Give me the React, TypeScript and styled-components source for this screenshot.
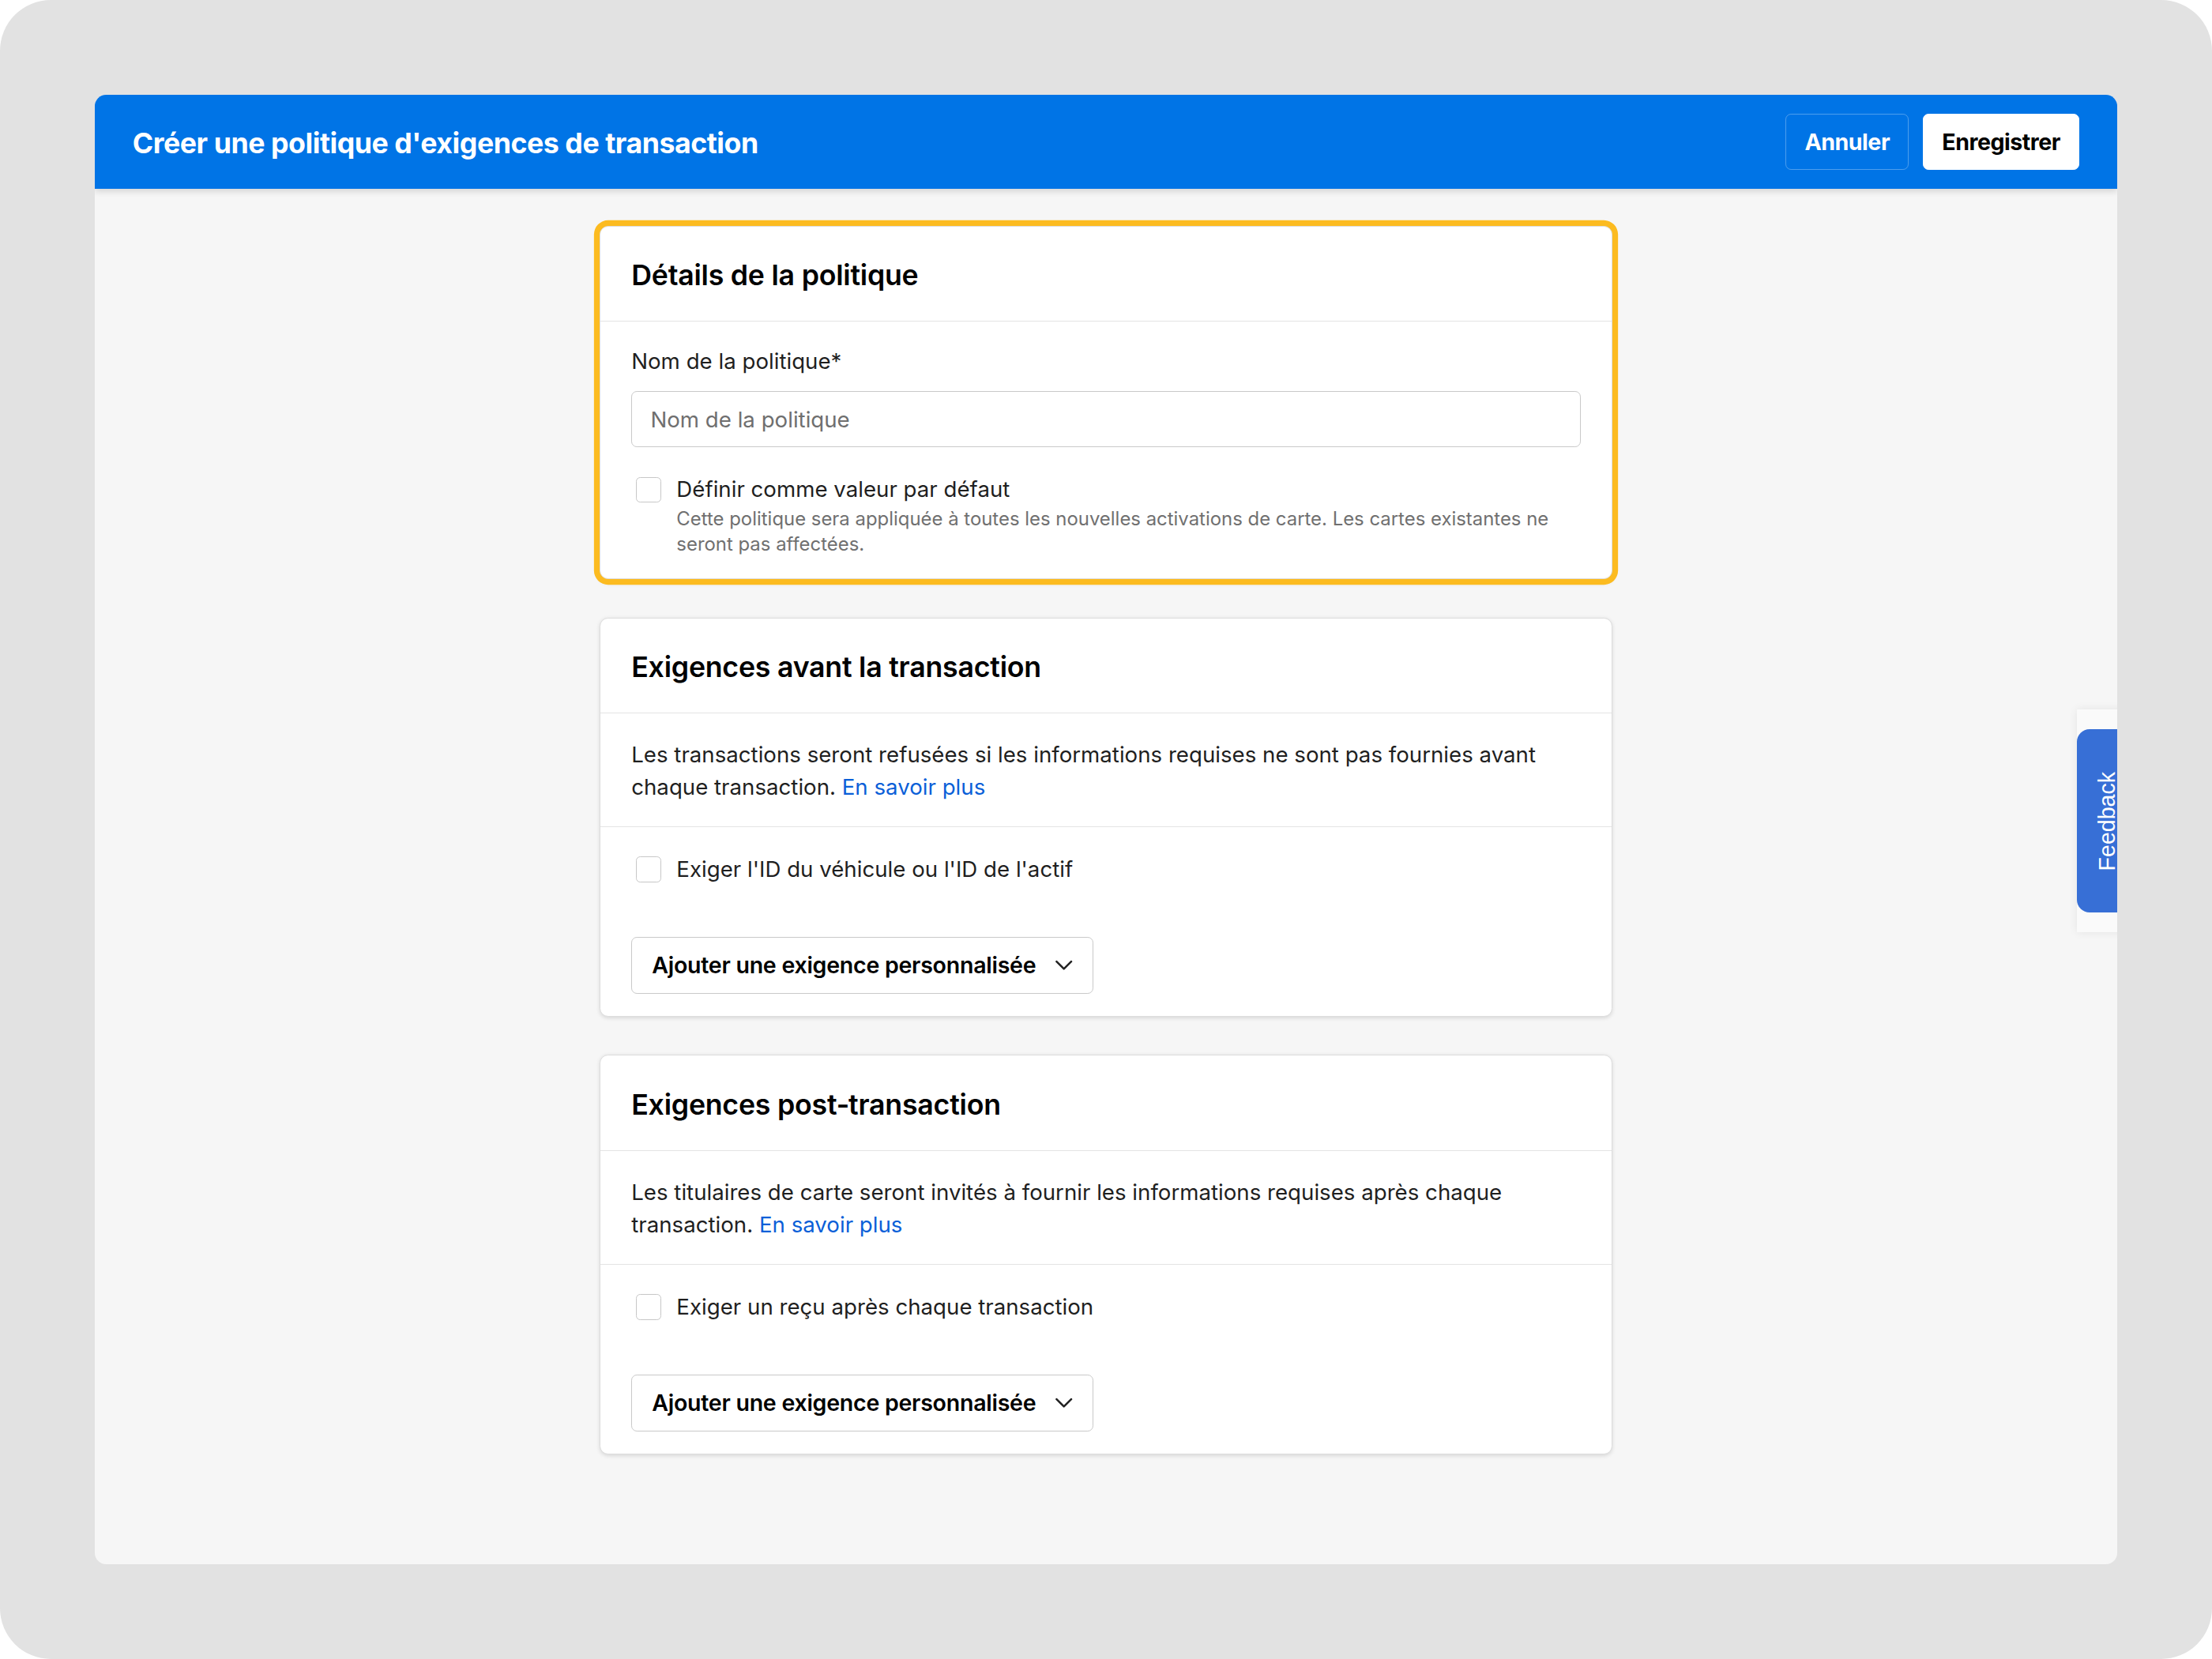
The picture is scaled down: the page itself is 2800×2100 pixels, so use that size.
import React from 'react';
import styled, { createGlobalStyle, css } from 'styled-components';

const GlobalStyle = createGlobalStyle`
  html, body {
    margin: 0;
    padding: 0;
    background: #ffffff;
  }
  body {
    font-family: Inter, "Noto Sans", sans-serif;
    -webkit-font-smoothing: antialiased;
  }
  * {
    box-sizing: border-box;
  }
`;

// the design is drawn at 1568 x 1176 and scaled up to fill the 2800 x 2100 window
const Frame = styled.div`
  zoom: 1.7857;
  width: 1568px;
  height: 1176px;
  padding: 67px;
  background: #e2e2e2;
  border-radius: 36px;
`;

const Window = styled.div`
  position: relative;
  height: 100%;
  display: flex;
  flex-direction: column;
  background: #f6f6f6;
  border-radius: 8px;
  overflow: hidden;
`;

const TopBar = styled.header`
  position: relative;
  z-index: 1;
  flex: none;
  height: 67px;
  display: flex;
  align-items: center;
  justify-content: space-between;
  padding: 0 27px;
  background: #0074e6;
  box-shadow: 0 2px 4px rgba(0, 0, 0, 0.12);
`;

const PageTitle = styled.h1`
  margin: 0;
  padding-top: 2px;
  font-size: 20px;
  font-weight: 700;
  letter-spacing: -0.26px;
  color: #ffffff;
`;

const Actions = styled.div`
  display: flex;
  gap: 10px;
`;

const HeaderButton = styled.button<{ $primary?: boolean }>`
  height: 40px;
  padding: 0 13px;
  border-radius: 4px;
  font-family: Inter, sans-serif;
  font-size: 16px;
  font-weight: 700;
  letter-spacing: -0.27px;
  cursor: pointer;
  border: 1px solid ${(p) => (p.$primary ? '#ffffff' : 'rgba(255, 255, 255, 0.3)')};
  background: ${(p) => (p.$primary ? '#ffffff' : 'transparent')};
  color: ${(p) => (p.$primary ? '#000000' : '#ffffff')};
`;

const Content = styled.main`
  flex: 1;
  display: flex;
  flex-direction: column;
  align-items: center;
  gap: 27px;
  padding-top: 26px;
`;

const Card = styled.section<{ $highlight?: boolean }>`
  width: 718px;
  background: #ffffff;
  border: 1px solid #dddddd;
  border-radius: 6px;
  box-shadow: 0 1px 3px rgba(0, 0, 0, 0.12);
  ${(p) =>
    p.$highlight &&
    css`
      box-shadow: 0 0 0 4px #fcbb20, 0 2px 4px rgba(0, 0, 0, 0.15);
    `}
`;

const CardHeader = styled.div`
  padding: 21px 22px 19px;
  border-bottom: 1px solid #e4e4e4;
`;

const CardTitle = styled.h2`
  margin: 0;
  font-size: 20px;
  line-height: 27px;
  font-weight: 600;
  letter-spacing: -0.13px;
  color: #000000;
`;

const Section = styled.div<{ $divided?: boolean }>`
  padding: 18px 22px 16px;
  ${(p) =>
    p.$divided &&
    css`
      border-bottom: 1px solid #e4e4e4;
    `}
`;

const FieldLabel = styled.label`
  display: block;
  margin-bottom: 9px;
  font-size: 15.5px;
  line-height: 24px;
  color: #1f1f1f;
`;

const TextInput = styled.input`
  display: block;
  width: 100%;
  height: 40px;
  padding: 0 13px;
  border: 1px solid #c9c9c9;
  border-radius: 4px;
  font-family: Inter, sans-serif;
  font-size: 15.5px;
  color: #1f1f1f;
  outline: none;

  &::placeholder {
    color: #6f6f6f;
    opacity: 1;
  }
`;

const CheckRow = styled.label<{ $spaced?: boolean }>`
  display: flex;
  align-items: flex-start;
  margin-top: ${(p) => (p.$spaced ? '18px' : '0')};
  cursor: pointer;
`;

const CheckBox = styled.span`
  flex: none;
  width: 18px;
  height: 18px;
  margin: 3px 11px 0 3px;
  background: #ffffff;
  border: 1px solid #c7c7c7;
  border-radius: 3px;
`;

const CheckText = styled.span`
  display: flex;
  flex-direction: column;
`;

const CheckLabel = styled.span`
  font-size: 15.5px;
  line-height: 24px;
  color: #1f1f1f;
`;

const CheckHint = styled.span`
  font-size: 13.4px;
  line-height: 18px;
  color: #707070;
`;

const Description = styled.p`
  margin: 0;
  font-size: 15.5px;
  line-height: 23px;
  color: #1f1f1f;
`;

const Link = styled.a`
  color: #0b5fd8;
  text-decoration: none;
`;

const Dropdown = styled.button`
  display: inline-flex;
  align-items: center;
  gap: 14px;
  height: 40px;
  margin-top: 36px;
  padding: 0 14px;
  background: #ffffff;
  border: 1px solid #c9c9c9;
  border-radius: 4px;
  font-family: Inter, sans-serif;
  font-size: 16px;
  font-weight: 600;
  letter-spacing: -0.15px;
  color: #000000;
  cursor: pointer;
`;

const FeedbackDock = styled.div`
  position: absolute;
  top: 436px;
  right: -15px;
  padding: 14px 0;
  background: #fafafa;
  box-shadow: 0 0 6px rgba(0, 0, 0, 0.08);
`;

const FeedbackTab = styled.button`
  display: flex;
  align-items: center;
  justify-content: center;
  width: 44px;
  height: 130px;
  padding: 0;
  border: none;
  border-radius: 9px;
  background: #376fd6;
  color: #ffffff;
  font-family: "Liberation Sans", Arial, sans-serif;
  font-size: 16px;
  cursor: pointer;
`;

const FeedbackText = styled.span`
  writing-mode: vertical-rl;
  transform: rotate(180deg);
`;

const Chevron = () => (
  <svg width="12" height="8" viewBox="0 0 12 8" fill="none">
    <polyline
      points="0.8,1.2 6,6.4 11.2,1.2"
      stroke="#222222"
      strokeWidth="1.4"
      strokeLinecap="round"
      strokeLinejoin="round"
    />
  </svg>
);

type RequirementCardProps = {
  title: string;
  text: string;
  checkLabel: string;
};

const RequirementCard = ({ title, text, checkLabel }: RequirementCardProps) => (
  <Card>
    <CardHeader>
      <CardTitle>{title}</CardTitle>
    </CardHeader>
    <Section $divided>
      <Description>
        {text} <Link href="#">En savoir plus</Link>
      </Description>
    </Section>
    <Section>
      <CheckRow>
        <CheckBox />
        <CheckText>
          <CheckLabel>{checkLabel}</CheckLabel>
        </CheckText>
      </CheckRow>
      <Dropdown>
        Ajouter une exigence personnalisée
        <Chevron />
      </Dropdown>
    </Section>
  </Card>
);

const App = () => {
  return (
    <>
      <GlobalStyle />
      <Frame>
        <Window>
          <TopBar>
            <PageTitle>Créer une politique d'exigences de transaction</PageTitle>
            <Actions>
              <HeaderButton>Annuler</HeaderButton>
              <HeaderButton $primary>Enregistrer</HeaderButton>
            </Actions>
          </TopBar>

          <Content>
            <Card $highlight>
              <CardHeader>
                <CardTitle>Détails de la politique</CardTitle>
              </CardHeader>
              <Section style={{ paddingTop: 16, paddingBottom: 15 }}>
                <FieldLabel htmlFor="policy-name">Nom de la politique*</FieldLabel>
                <TextInput id="policy-name" placeholder="Nom de la politique" />
                <CheckRow $spaced>
                  <CheckBox />
                  <CheckText>
                    <CheckLabel>Définir comme valeur par défaut</CheckLabel>
                    <CheckHint>
                      Cette politique sera appliquée à toutes les nouvelles activations de carte. Les
                      cartes existantes ne seront pas affectées.
                    </CheckHint>
                  </CheckText>
                </CheckRow>
              </Section>
            </Card>

            <RequirementCard
              title="Exigences avant la transaction"
              text="Les transactions seront refusées si les informations requises ne sont pas fournies avant chaque transaction."
              checkLabel="Exiger l'ID du véhicule ou l'ID de l'actif"
            />

            <RequirementCard
              title={'Exigences post\u2011transaction'}
              text="Les titulaires de carte seront invités à fournir les informations requises après chaque transaction."
              checkLabel="Exiger un reçu après chaque transaction"
            />
          </Content>

          <FeedbackDock>
            <FeedbackTab>
              <FeedbackText>Feedback</FeedbackText>
            </FeedbackTab>
          </FeedbackDock>
        </Window>
      </Frame>
    </>
  );
};

export default App;
